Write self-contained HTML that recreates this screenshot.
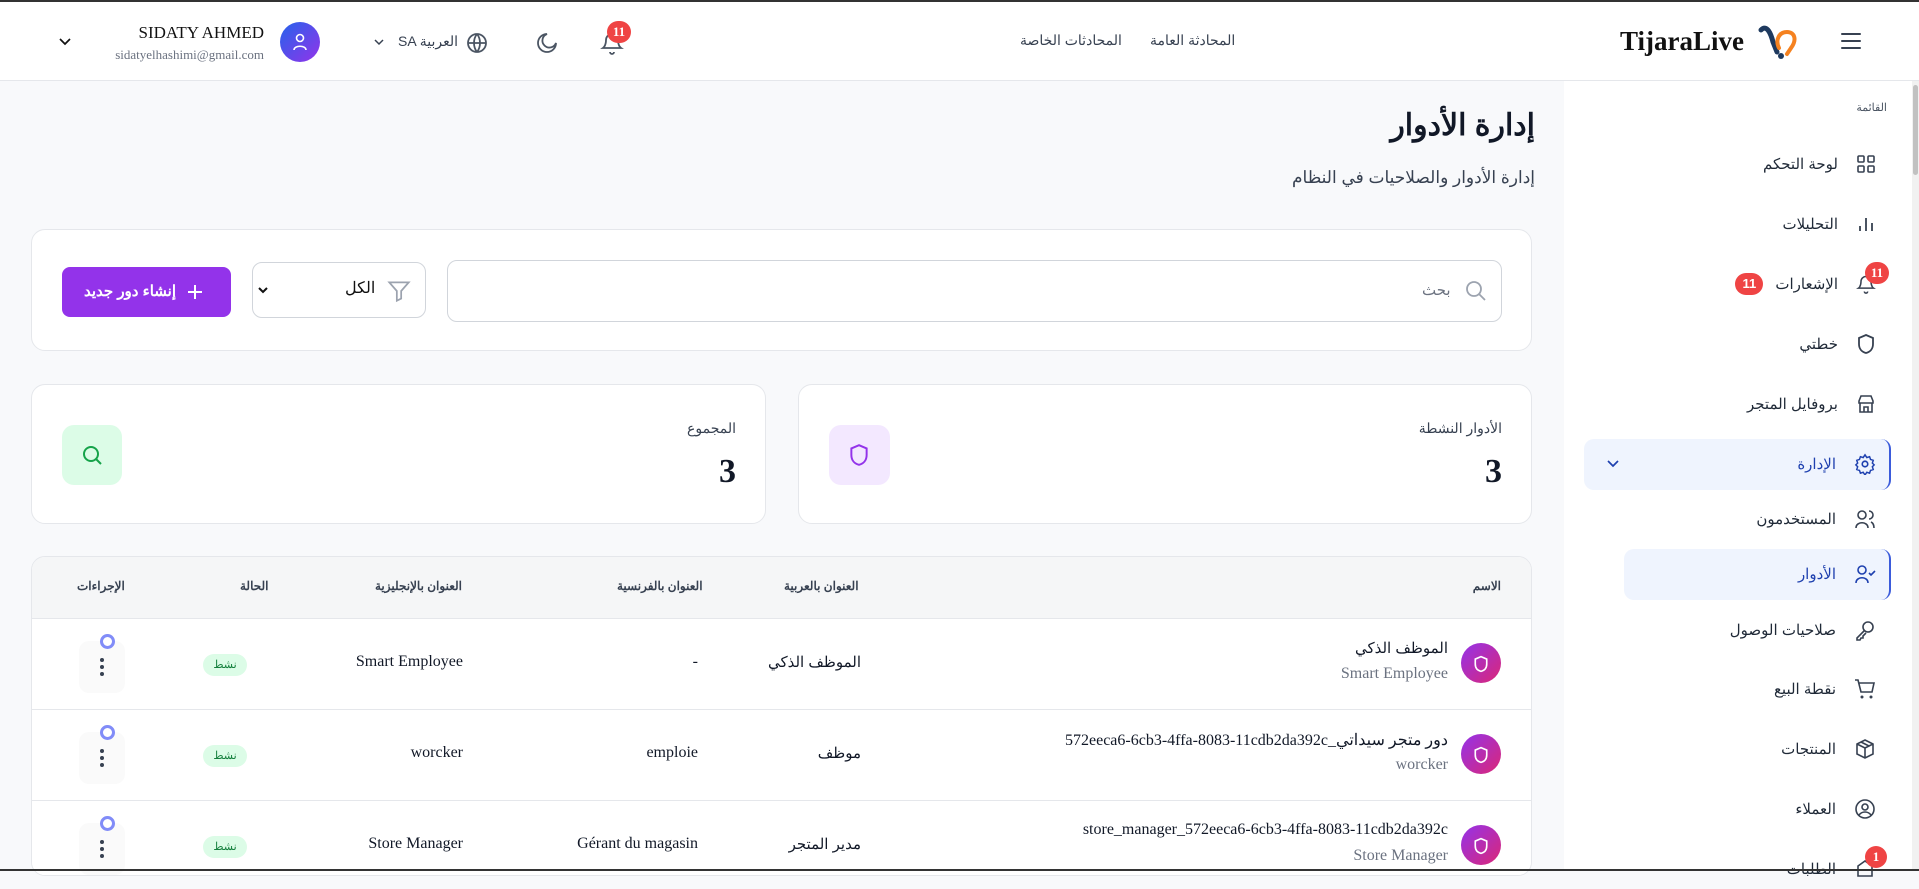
<!DOCTYPE html>
<html><head><meta charset="utf-8"><style>
*{box-sizing:border-box;margin:0;padding:0}
body{width:1919px;height:871px;overflow:hidden;background:#f8f9fb;font-family:"Liberation Serif","Noto Sans CJK SC",sans-serif;color:#111827;position:relative}
.a{position:absolute}
.hdr{left:0;top:0;width:1919px;height:81px;background:#fff;border-bottom:1px solid #e5e7eb;border-top:2px solid #333}
.side{left:1564px;top:81px;width:355px;height:790px;background:#fff}
.card{background:#fff;border:1px solid #e5e7eb;border-radius:14px}
.r{text-align:right;direction:rtl}
svg{display:block}
.si{position:absolute;right:43px;width:300px;height:40px;display:flex;align-items:center;justify-content:flex-end;font-size:15px;color:#1f2937;font-family:"Liberation Sans",sans-serif}
.si span{margin-right:18px}
.th{position:absolute;top:22px;font-size:12px;color:#374151;font-family:"Liberation Sans",sans-serif;font-weight:bold}
.row{position:absolute;left:0;width:1501px;height:91px;border-top:1px solid #e5e7eb;background:#fff}
.cell{position:absolute;font-size:16px;color:#111827;text-align:right}
.badge{position:absolute;left:171px;top:35px;width:44px;height:22px;border-radius:11px;background:#dcfce7;color:#15803d;font-size:11px;text-align:center;line-height:22px;font-family:"Liberation Sans",sans-serif}
.act{position:absolute;left:47px;top:22px;width:46px;height:52px;border-radius:10px;background:#fafafa}
.dot3{position:absolute;left:21px;top:16px;width:4px;height:20px}
.ring{position:absolute;left:68px;top:15px;width:15px;height:15px;border:3px solid #818cf8;border-radius:50%;background:#fff}
.av{position:absolute;right:32px;top:24px;width:40px;height:40px;border-radius:50%;background:linear-gradient(135deg,#9333ea,#db2777)}
</style></head><body>
<div class="a hdr">
 <svg class="a" style="left:1840px;top:30px" width="22" height="18" viewBox="0 0 22 18"><path d="M2 2h18M2 9h18M2 16h18" stroke="#374151" stroke-width="2" stroke-linecap="round"/></svg>
 <svg class="a" style="left:1757px;top:20px" width="40" height="40" viewBox="0 0 40 40"><path d="M4 8c6-6 10 4 12 12l4 10" stroke="#1e3a5f" stroke-width="5" fill="none" stroke-linecap="round"/><path d="M22 26c-4-8 0-16 8-16s10 8 4 16l-4 6" stroke="#f58220" stroke-width="4" fill="none" stroke-linecap="round"/><circle cx="24" cy="34" r="3" fill="#1e3a5f"/></svg>
 <div class="a" style="left:1620px;top:24px;width:124px;text-align:right;font-size:27px;font-weight:bold;color:#111">TijaraLive</div>
 <div class="a" style="left:1150px;top:30px;font-size:14px;color:#374151;font-family:'Liberation Sans',sans-serif">المحادثة العامة</div>
 <div class="a" style="left:1020px;top:30px;font-size:14px;color:#374151;font-family:'Liberation Sans',sans-serif">المحادثات الخاصة</div>
 <svg class="a" style="left:600px;top:28px" width="24" height="26" viewBox="0 0 24 24"><path d="M6 9a6 6 0 0 1 12 0c0 6 3 8 3 8H3s3-2 3-8M10 21a2 2 0 0 0 4 0" stroke="#4b5563" stroke-width="1.8" fill="none"/></svg>
 <div class="a" style="left:607px;top:19px;width:24px;height:22px;border-radius:11px;background:#ef4444;color:#fff;font-size:13px;font-weight:bold;text-align:center;line-height:22px">11</div>
 <svg class="a" style="left:535px;top:29px" width="24" height="24" viewBox="0 0 24 24"><path d="M12 3a7 7 0 1 0 9 9 9 9 0 1 1-9-9z" stroke="#4b5563" stroke-width="1.8" fill="none"/></svg>
 <svg class="a" style="left:465px;top:29px" width="24" height="24" viewBox="0 0 24 24"><circle cx="12" cy="12" r="9" stroke="#4b5563" stroke-width="1.8" fill="none"/><path d="M3 12h18M12 3c-4 5-4 13 0 18M12 3c4 5 4 13 0 18" stroke="#4b5563" stroke-width="1.8" fill="none"/></svg>
 <div class="a" style="left:398px;top:31px;font-size:14px;color:#374151;font-family:'Liberation Sans',sans-serif">SA العربية</div>
 <svg class="a" style="left:373px;top:35px" width="12" height="10" viewBox="0 0 12 10"><path d="M2 3l4 4 4-4" stroke="#374151" stroke-width="1.5" fill="none"/></svg>
 <div class="a" style="left:280px;top:20px;width:40px;height:40px;border-radius:50%;background:linear-gradient(135deg,#2563eb,#9333ea)"></div>
 <svg class="a" style="left:291px;top:30px" width="18" height="20" viewBox="0 0 18 20"><circle cx="9" cy="6" r="3.5" stroke="#fff" stroke-width="1.6" fill="none"/><path d="M3 18c0-5 12-5 12 0" stroke="#fff" stroke-width="1.6" fill="none"/></svg>
 <div class="a" style="left:60px;top:21px;width:204px;text-align:right;font-size:17px;color:#111">SIDATY AHMED</div>
 <div class="a" style="left:60px;top:45px;width:204px;text-align:right;font-size:13px;color:#6b7280">sidatyelhashimi@gmail.com</div>
 <svg class="a" style="left:58px;top:35px" width="14" height="10" viewBox="0 0 14 10"><path d="M2 2l5 5 5-5" stroke="#111" stroke-width="1.7" fill="none"/></svg>
</div>
<div class="a side">
 <div class="a" style="right:32px;top:20px;font-size:11px;color:#4b5563;font-family:'Liberation Sans',sans-serif">القائمة</div>
 <div class="si" style="top:63px"><span>لوحة التحكم</span><svg width="20" height="20" viewBox="0 0 20 20"><g stroke="#374151" stroke-width="1.6" fill="none"><rect x="2" y="2" width="6" height="6" rx="1"/><rect x="12" y="2" width="6" height="6" rx="1"/><rect x="2" y="12" width="6" height="6" rx="1"/><rect x="12" y="12" width="6" height="6" rx="1"/></g></svg></div>
 <div class="si" style="top:123px"><span>التحليلات</span><svg width="20" height="20" viewBox="0 0 20 20"><path d="M4 17v-5M10 17V4M16 17v-8" stroke="#374151" stroke-width="1.8"/></svg></div>
 <div class="si" style="top:183px"><div style="width:28px;height:22px;border-radius:11px;background:#ef4444;color:#fff;font-size:13px;font-weight:bold;text-align:center;line-height:22px;margin-right:12px">11</div><span>الإشعارات</span><svg width="20" height="22" viewBox="0 0 24 24"><path d="M6 9a6 6 0 0 1 12 0c0 6 3 8 3 8H3s3-2 3-8M10 21a2 2 0 0 0 4 0" stroke="#374151" stroke-width="1.8" fill="none"/></svg></div>
 <div class="a" style="right:30px;top:181px;width:24px;height:22px;border-radius:11px;background:#ef4444;color:#fff;font-size:13px;font-weight:bold;text-align:center;line-height:22px">11</div>
 <div class="si" style="top:243px"><span>خطتي</span><svg width="20" height="22" viewBox="0 0 20 22"><path d="M10 2l7 3v6c0 5-3 8-7 9-4-1-7-4-7-9V5z" stroke="#374151" stroke-width="1.8" fill="none"/></svg></div>
 <div class="si" style="top:303px"><span>بروفايل المتجر</span><svg width="20" height="20" viewBox="0 0 20 20"><path d="M3 7l2-5h10l2 5v2H3zM4 9v9h12V9M8 18v-5h4v5" stroke="#374151" stroke-width="1.6" fill="none"/></svg></div>
 <div class="a" style="left:20px;top:358px;width:307px;height:51px;background:#eff4fe;border-radius:10px;border-right:2px solid #3b5bdb"></div>
 <svg class="a" style="left:42px;top:378px" width="14" height="10" viewBox="0 0 14 10"><path d="M2 2l5 5 5-5" stroke="#1e40af" stroke-width="1.7" fill="none"/></svg>
 <div class="si" style="top:363px;color:#1e40af"><span>الإدارة</span><svg width="22" height="22" viewBox="0 0 24 24"><circle cx="12" cy="12" r="3" stroke="#1e40af" stroke-width="1.8" fill="none"/><path d="M12 2l2 3 3-1 1 3 3 1-1 3 2 2-2 2 1 3-3 1-1 3-3-1-2 3-2-3-3 1-1-3-3-1 1-3-2-2 2-2-1-3 3-1 1-3 3 1z" stroke="#1e40af" stroke-width="1.6" fill="none"/></svg></div>
 <div class="si" style="top:418px"><span>المستخدمون</span><svg width="22" height="22" viewBox="0 0 22 22"><circle cx="8" cy="7" r="4" stroke="#374151" stroke-width="1.6" fill="none"/><path d="M2 20c0-7 12-7 12 0M15 3a4 4 0 0 1 0 8M17 14c2 1 3 3 3 6" stroke="#374151" stroke-width="1.6" fill="none"/></svg></div>
 <div class="a" style="left:60px;top:468px;width:267px;height:51px;background:#eff4fe;border-radius:10px;border-right:2px solid #3b5bdb"></div>
 <div class="si" style="top:473px;color:#1e40af"><span>الأدوار</span><svg width="22" height="22" viewBox="0 0 22 22"><circle cx="8" cy="7" r="4" stroke="#1e40af" stroke-width="1.6" fill="none"/><path d="M2 20c0-7 12-7 12 0M15 10l2 2 4-4" stroke="#1e40af" stroke-width="1.6" fill="none"/></svg></div>
 <div class="si" style="top:529px"><span>صلاحيات الوصول</span><svg width="22" height="22" viewBox="0 0 22 22"><circle cx="14" cy="8" r="5" stroke="#374151" stroke-width="1.6" fill="none"/><path d="M10 12l-7 7v2h3l1-2h2v-2l3-3" stroke="#374151" stroke-width="1.6" fill="none"/></svg></div>
 <div class="si" style="top:588px"><span>نقطة البيع</span><svg width="22" height="22" viewBox="0 0 22 22"><path d="M1 2h3l3 12h11l2-9H5" stroke="#374151" stroke-width="1.6" fill="none"/><circle cx="8" cy="19" r="1.5" fill="#374151"/><circle cx="17" cy="19" r="1.5" fill="#374151"/></svg></div>
 <div class="si" style="top:648px"><span>المنتجات</span><svg width="22" height="22" viewBox="0 0 22 22"><path d="M11 2l8 4v10l-8 4-8-4V6zM3 6l8 4 8-4M11 10v10M7 4l8 4" stroke="#374151" stroke-width="1.6" fill="none"/></svg></div>
 <div class="si" style="top:708px"><span>العملاء</span><svg width="22" height="22" viewBox="0 0 22 22"><circle cx="11" cy="11" r="9" stroke="#374151" stroke-width="1.6" fill="none"/><circle cx="11" cy="9" r="3" stroke="#374151" stroke-width="1.6" fill="none"/><path d="M5 17c3-4 9-4 12 0" stroke="#374151" stroke-width="1.6" fill="none"/></svg></div>
 <div class="si" style="top:768px"><span>الطلبات</span><svg width="22" height="22" viewBox="0 0 22 22"><path d="M4 8l7-5 7 5v10H4z" stroke="#374151" stroke-width="1.6" fill="none"/></svg></div>
 <div class="a" style="right:32px;top:765px;width:22px;height:22px;border-radius:11px;background:#ef4444;color:#fff;font-size:13px;font-weight:bold;text-align:center;line-height:22px">1</div>
</div>
<div class="a" style="left:1912px;top:81px;width:7px;height:790px;background:#f1f1f1"></div>
<div class="a" style="left:1913px;top:85px;width:5px;height:90px;background:#c1c1c1;border-radius:3px"></div>
<div class="a r" style="left:600px;top:108px;width:935px;font-size:30px;font-weight:bold;font-family:'Liberation Sans',sans-serif">إدارة الأدوار</div>
<div class="a r" style="left:600px;top:168px;width:935px;font-size:17px;color:#374151;font-family:'Liberation Sans',sans-serif">إدارة الأدوار والصلاحيات في النظام</div>
<div class="a card" style="left:31px;top:229px;width:1501px;height:122px">
 <div class="a" style="left:415px;top:30px;width:1055px;height:62px;border:1px solid #d1d5db;border-radius:10px"></div>
 <svg class="a" style="left:1432px;top:49px" width="24" height="24" viewBox="0 0 24 24"><circle cx="10" cy="10" r="7" stroke="#9ca3af" stroke-width="1.8" fill="none"/><path d="M15 15l6 6" stroke="#9ca3af" stroke-width="1.8"/></svg>
 <div class="a" style="left:1390px;top:51px;font-size:15px;color:#6b7280;font-family:'Liberation Sans',sans-serif">بحث</div>
 <div class="a" style="left:220px;top:32px;width:174px;height:56px;border:1px solid #d1d5db;border-radius:10px"></div>
 <svg class="a" style="left:354px;top:48px" width="26" height="26" viewBox="0 0 24 24"><path d="M3 4h18l-7 8v7l-4 2v-9z" stroke="#9ca3af" stroke-width="1.6" fill="none"/></svg>
 <div class="a" style="left:313px;top:48px;font-size:16px;color:#111;font-family:'Liberation Sans',sans-serif">الكل</div>
 <svg class="a" style="left:225px;top:56px" width="12" height="10" viewBox="0 0 12 10"><path d="M2 2l4 4 4-4" stroke="#111" stroke-width="2" fill="none"/></svg>
 <div class="a" style="left:30px;top:37px;width:169px;height:50px;border-radius:8px;background:#9333ea;color:#fff;font-size:15px;font-weight:bold;font-family:'Liberation Sans',sans-serif;line-height:50px;text-align:right;padding-right:55px">إنشاء دور جديد</div>
 <svg class="a" style="left:154px;top:53px" width="18" height="18" viewBox="0 0 18 18"><path d="M9 2v14M2 9h14" stroke="#fff" stroke-width="2"/></svg>
</div>
<div class="a card" style="left:798px;top:384px;width:734px;height:140px">
 <div class="a" style="right:29px;top:35px;font-size:14px;color:#374151;font-family:'Liberation Sans',sans-serif">الأدوار النشطة</div>
 <div class="a" style="right:29px;top:68px;font-size:34px;font-weight:bold">3</div>
 <div class="a" style="left:30px;top:40px;width:61px;height:60px;border-radius:12px;background:#f3e8ff"></div>
 <svg class="a" style="left:49px;top:58px" width="22" height="24" viewBox="0 0 20 22"><path d="M10 2l7 3v6c0 5-3 8-7 9-4-1-7-4-7-9V5z" stroke="#9333ea" stroke-width="1.8" fill="none"/></svg>
</div>
<div class="a card" style="left:31px;top:384px;width:735px;height:140px">
 <div class="a" style="right:29px;top:35px;font-size:14px;color:#374151;font-family:'Liberation Sans',sans-serif">المجموع</div>
 <div class="a" style="right:29px;top:68px;font-size:34px;font-weight:bold">3</div>
 <div class="a" style="left:30px;top:40px;width:60px;height:60px;border-radius:12px;background:#dcfce7"></div>
 <svg class="a" style="left:48px;top:58px" width="24" height="24" viewBox="0 0 24 24"><circle cx="11" cy="11" r="7" stroke="#16a34a" stroke-width="2" fill="none"/><path d="M16 16l5 5" stroke="#16a34a" stroke-width="2"/></svg>
</div>
<div class="a" style="left:31px;top:556px;width:1501px;height:320px;background:#fff;border:1px solid #e5e7eb;border-radius:14px;overflow:hidden">
 <div class="a" style="left:0;top:0;width:1501px;height:61px;background:#f5f6f7"></div>
 <div class="th" style="right:30px">الاسم</div>
 <div class="th" style="left:752px">العنوان بالعربية</div>
 <div class="th" style="left:585px">العنوان بالفرنسية</div>
 <div class="th" style="left:343px">العنوان بالإنجليزية</div>
 <div class="th" style="left:208px">الحالة</div>
 <div class="th" style="left:45px">الإجراءات</div>
 <div class="row" style="top:61px">
  <div class="av"></div><svg class="a" style="right:43px;top:36px" width="18" height="18" viewBox="0 0 20 22"><path d="M10 2l7 3v6c0 5-3 8-7 9-4-1-7-4-7-9V5z" stroke="#fff" stroke-width="2" fill="none"/></svg>
  <div class="cell" style="right:85px;top:20px;font-family:'Liberation Sans',sans-serif;font-size:15px">الموظف الذكي</div>
  <div class="cell" style="right:85px;top:46px;color:#6b7280">Smart Employee</div>
  <div class="cell" style="right:672px;top:34px;font-family:'Liberation Sans',sans-serif;font-size:15px">الموظف الذكي</div>
  <div class="cell" style="right:835px;top:34px">-</div>
  <div class="cell" style="right:1070px;top:34px">Smart Employee</div>
  <div class="badge">نشط</div><div class="act"><svg class="dot3" viewBox="0 0 4 20"><circle cx="2" cy="3" r="2" fill="#374151"/><circle cx="2" cy="10" r="2" fill="#374151"/><circle cx="2" cy="17" r="2" fill="#374151"/></svg></div><div class="ring"></div>
 </div>
 <div class="row" style="top:152px">
  <div class="av"></div><svg class="a" style="right:43px;top:36px" width="18" height="18" viewBox="0 0 20 22"><path d="M10 2l7 3v6c0 5-3 8-7 9-4-1-7-4-7-9V5z" stroke="#fff" stroke-width="2" fill="none"/></svg>
  <div class="cell" style="right:85px;top:20px;direction:rtl">دور متجر سيداتي_572eeca6-6cb3-4ffa-8083-11cdb2da392c</div>
  <div class="cell" style="right:85px;top:46px;color:#6b7280">worcker</div>
  <div class="cell" style="right:672px;top:34px;font-family:'Liberation Sans',sans-serif;font-size:15px">موظف</div>
  <div class="cell" style="right:835px;top:34px">emploie</div>
  <div class="cell" style="right:1070px;top:34px">worcker</div>
  <div class="badge">نشط</div><div class="act"><svg class="dot3" viewBox="0 0 4 20"><circle cx="2" cy="3" r="2" fill="#374151"/><circle cx="2" cy="10" r="2" fill="#374151"/><circle cx="2" cy="17" r="2" fill="#374151"/></svg></div><div class="ring"></div>
 </div>
 <div class="row" style="top:243px">
  <div class="av"></div><svg class="a" style="right:43px;top:36px" width="18" height="18" viewBox="0 0 20 22"><path d="M10 2l7 3v6c0 5-3 8-7 9-4-1-7-4-7-9V5z" stroke="#fff" stroke-width="2" fill="none"/></svg>
  <div class="cell" style="right:85px;top:20px">store_manager_572eeca6-6cb3-4ffa-8083-11cdb2da392c</div>
  <div class="cell" style="right:85px;top:46px;color:#6b7280">Store Manager</div>
  <div class="cell" style="right:672px;top:34px;font-family:'Liberation Sans',sans-serif;font-size:15px">مدير المتجر</div>
  <div class="cell" style="right:835px;top:34px">Gérant du magasin</div>
  <div class="cell" style="right:1070px;top:34px">Store Manager</div>
  <div class="badge">نشط</div><div class="act"><svg class="dot3" viewBox="0 0 4 20"><circle cx="2" cy="3" r="2" fill="#374151"/><circle cx="2" cy="10" r="2" fill="#374151"/><circle cx="2" cy="17" r="2" fill="#374151"/></svg></div><div class="ring"></div>
 </div>
</div>
<div class="a" style="left:0;top:869px;width:1919px;height:2px;background:#333"></div>
</body></html>
